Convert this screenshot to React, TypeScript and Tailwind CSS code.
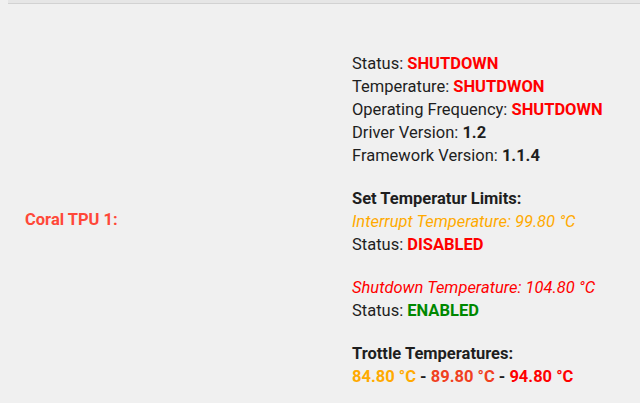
import React from 'react'

const Line = ({ label, value, color }: { label: string; value: string; color: string }) => (
  <div>
    {label} <span className={`font-bold ${color}`}>{value}</span>
  </div>
)

export default function App() {
  return (
    <div
      className="w-[640px] h-[403px] bg-[#f0f0f0] text-[#1e1e1e] overflow-hidden"
      style={{ fontFamily: 'Roboto, "Noto Sans", sans-serif' }}
    >
      <div className="ml-2 h-[4px] bg-[#e6e6e6] border-b border-[#d2d2d2]" />

      <div className="flex items-center pt-[48px]">
        <div className="w-[352px] pl-[25px] font-bold text-[16.5px] text-[#ff4838]">Coral TPU 1:</div>

        <div className="text-[16.5px] leading-[23px]">
          <Line label="Status:" value="SHUTDOWN" color="text-[#ff0000]" />
          <Line label="Temperature:" value="SHUTDWON" color="text-[#ff0000]" />
          <Line label="Operating Frequency:" value="SHUTDOWN" color="text-[#ff0000]" />
          <Line label="Driver Version:" value="1.2" color="text-[#1e1e1e]" />
          <Line label="Framework Version:" value="1.1.4" color="text-[#1e1e1e]" />

          <div className="mt-[20px] font-bold">Set Temperatur Limits:</div>
          <div className="italic text-[#ffaa00]">Interrupt Temperature: 99.80 °C</div>
          <Line label="Status:" value="DISABLED" color="text-[#ff0000]" />

          <div className="mt-[20px] italic text-[#ff0000]">Shutdown Temperature: 104.80 °C</div>
          <Line label="Status:" value="ENABLED" color="text-[#008800]" />

          <div className="mt-[20px] font-bold">Trottle Temperatures:</div>
          <div className="font-bold">
            <span className="text-[#ffaa00]">84.80 °C</span> -{' '}
            <span className="text-[#f04020]">89.80 °C</span> -{' '}
            <span className="text-[#ff0000]">94.80 °C</span>
          </div>
        </div>
      </div>
    </div>
  )
}
